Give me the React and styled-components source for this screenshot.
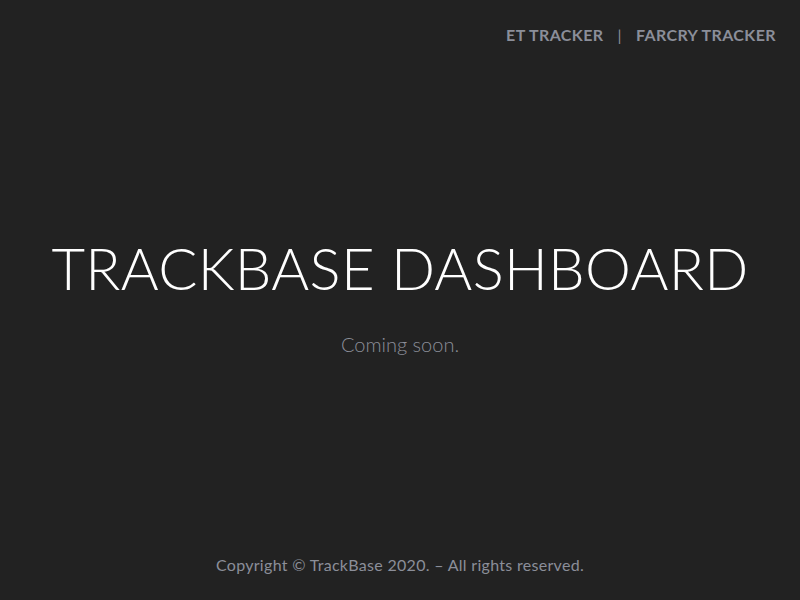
import styled, { createGlobalStyle } from 'styled-components';

const GlobalStyle = createGlobalStyle`
  html, body, #root {
    margin: 0;
    height: 100%;
  }
  body {
    background-color: #222222;
    font-family: Lato, "Noto Sans", sans-serif;
  }
`;

const Page = styled.div`
  display: flex;
  flex-direction: column;
  height: 100vh;
  box-sizing: border-box;
`;

const Header = styled.nav`
  display: flex;
  justify-content: flex-end;
  align-items: center;
  gap: 14px;
  padding: 25px 24px 0 0;
  font-size: 16px;
  font-weight: 700;
  letter-spacing: 0.4px;
  color: #8b8e99;
`;

const NavLink = styled.a`
  color: inherit;
  text-decoration: none;
  cursor: pointer;
`;

const Divider = styled.span`
  font-weight: 400;
`;

const Main = styled.main`
  flex: 1;
  display: flex;
  flex-direction: column;
  align-items: center;
  justify-content: center;
  padding-bottom: 10px;
`;

const Title = styled.h1`
  margin: 0;
  font-size: 58px;
  font-weight: 300;
  color: #ffffff;
  letter-spacing: 0.3px;
`;

const Subtitle = styled.p`
  margin: 30px 0 0;
  font-size: 20px;
  font-weight: 300;
  color: #8b8e99;
`;

const Footer = styled.footer`
  text-align: center;
  padding-bottom: 26px;
  font-size: 16px;
  letter-spacing: 0.3px;
  color: #8b8e99;
`;

const App = () => {
  return (
    <Page>
      <GlobalStyle />
      <Header>
        <NavLink>ET TRACKER</NavLink>
        <Divider>|</Divider>
        <NavLink>FARCRY TRACKER</NavLink>
      </Header>
      <Main>
        <Title>TRACKBASE DASHBOARD</Title>
        <Subtitle>Coming soon.</Subtitle>
      </Main>
      <Footer>Copyright © TrackBase 2020. – All rights reserved.</Footer>
    </Page>
  );
};

export default App;
